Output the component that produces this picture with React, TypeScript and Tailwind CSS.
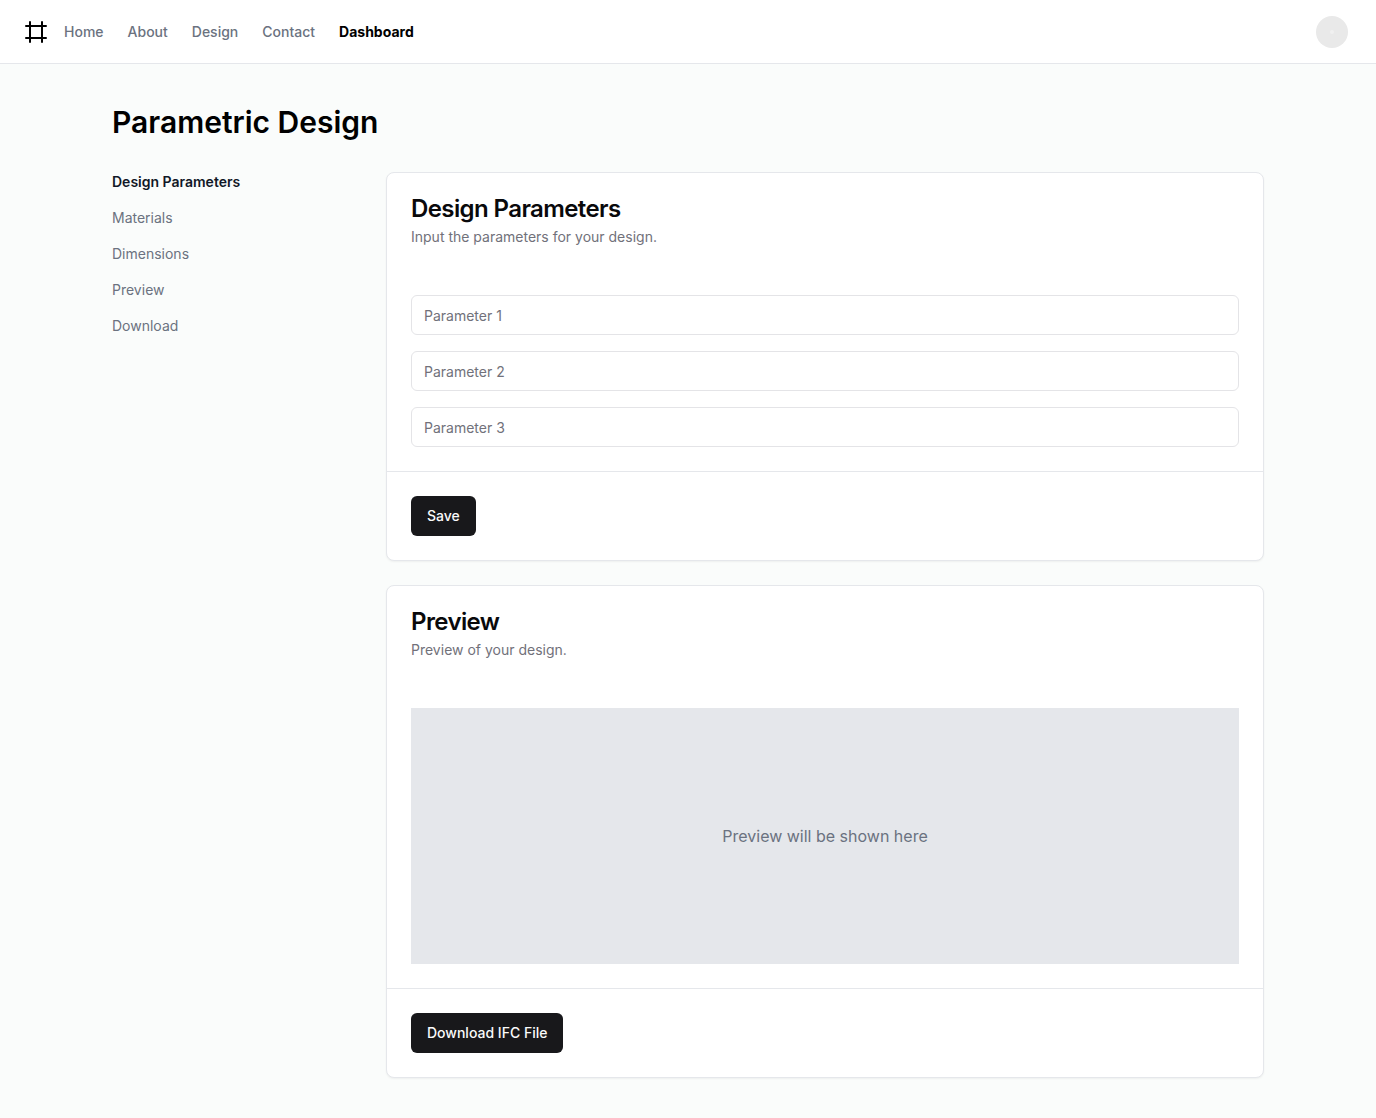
import type { ReactNode } from "react";
import { Frame } from "lucide-react";

const navLinks = ["Home", "About", "Design", "Contact", "Dashboard"];

const sections = [
  { label: "Design Parameters", href: "#design-parameters" },
  { label: "Materials", href: "#materials" },
  { label: "Dimensions", href: "#dimensions" },
  { label: "Preview", href: "#preview" },
  { label: "Download", href: "#download" },
];

const parameters = ["Parameter 1", "Parameter 2", "Parameter 3"];

interface CardProps {
  id: string;
  title: string;
  description: string;
  action: string;
  children: ReactNode;
}

function Card({ id, title, description, action, children }: CardProps) {
  return (
    <section id={id} className="rounded-lg border border-[#e5e7eb] bg-white shadow-xs">
      <div className="flex flex-col gap-1.5 p-6">
        <h2 className="text-2xl leading-6 font-semibold tracking-tight text-[#09090b]">{title}</h2>
        <p className="text-sm text-[#71717a]">{description}</p>
      </div>
      <div className="p-6">{children}</div>
      <div className="border-t border-[#e5e7eb] p-6">
        <button type="button" className="h-10 rounded-md bg-[#18181b] px-4 text-sm font-medium text-[#fafafa]">
          {action}
        </button>
      </div>
    </section>
  );
}

export default function App() {
  return (
    <div className="flex min-h-screen flex-col bg-[#fafcfb] font-['Inter',sans-serif] text-black">
      <header className="flex h-16 items-center gap-4 border-b border-[#e5e7eb] bg-white px-6">
        <a href="#home" aria-label="Parametric home">
          <Frame size={24} />
        </a>
        <nav className="flex items-center gap-6 text-sm font-medium">
          {navLinks.map((label) => (
            <a
              key={label}
              href={`#${label.toLowerCase()}`}
              className={label === "Dashboard" ? "font-bold text-black" : "text-[#6b7280]"}
            >
              {label}
            </a>
          ))}
        </nav>
        <button
          type="button"
          aria-label="Account"
          className="mr-1 ml-auto flex size-8 items-center justify-center rounded-full bg-[#e9e9e9]"
        >
          <span className="size-1 rounded-full bg-[#f0f0f0]" />
        </button>
      </header>
      <main className="flex-1 p-10">
        <div className="mx-auto w-full max-w-6xl">
          <h1 className="text-3xl font-semibold">Parametric Design</h1>
        </div>
        <div className="mx-auto mt-8 grid w-full max-w-6xl grid-cols-[250px_1fr] items-start gap-6">
          <nav className="grid gap-4 text-sm text-[#6b7280]">
            {sections.map(({ label, href }, i) => (
              <a key={label} href={href} className={i === 0 ? "font-semibold text-[#111827]" : ""}>
                {label}
              </a>
            ))}
          </nav>
          <div className="grid gap-6">
            <Card
              id="design-parameters"
              title="Design Parameters"
              description="Input the parameters for your design."
              action="Save"
            >
              <form className="flex flex-col gap-4">
                {parameters.map((label) => (
                  <input
                    key={label}
                    type="text"
                    aria-label={label}
                    placeholder={label}
                    className="h-10 w-full rounded-md border border-[#e4e4e7] bg-white px-3 text-sm placeholder:text-[#71717a]"
                  />
                ))}
              </form>
            </Card>
            <Card id="preview" title="Preview" description="Preview of your design." action="Download IFC File">
              <div className="flex h-64 items-center justify-center bg-[#e5e7eb] text-[#6b7280]">
                <p>Preview will be shown here</p>
              </div>
            </Card>
          </div>
        </div>
      </main>
    </div>
  );
}
